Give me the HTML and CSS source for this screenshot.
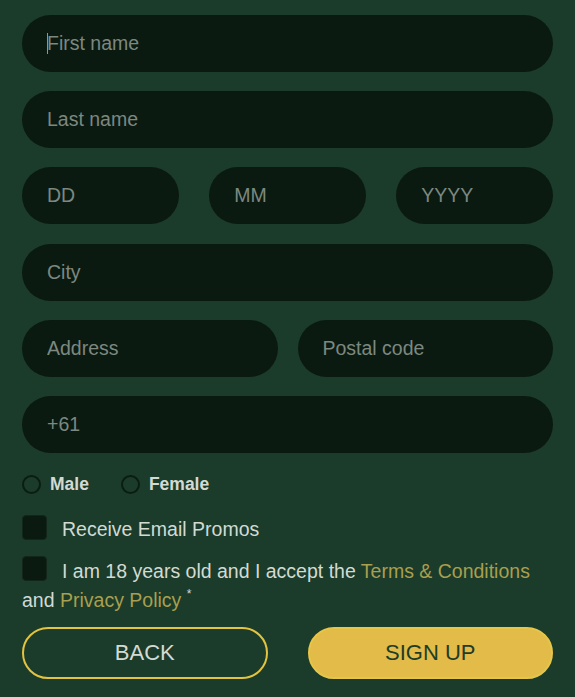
FILE: index.html
```html
<!DOCTYPE html>
<html>
<head>
<meta charset="utf-8">
<link rel="stylesheet" href="styles.css">
</head>
<body>
<form class="signup">
  <div class="fields">
    <div class="field-wrap">
      <input class="field" type="text" placeholder="First name">
      <span class="caret"></span>
    </div>
    <input class="field" type="text" placeholder="Last name">
    <div class="row-date">
      <input class="field" type="text" placeholder="DD">
      <input class="field" type="text" placeholder="MM">
      <input class="field" type="text" placeholder="YYYY">
    </div>
    <input class="field" type="text" placeholder="City">
    <div class="row-addr">
      <input class="field" type="text" placeholder="Address">
      <input class="field" type="text" placeholder="Postal code">
    </div>
    <input class="field" type="text" placeholder="+61">
  </div>

  <div class="gender">
    <label class="radio"><span class="radio-dot"></span>Male</label>
    <label class="radio"><span class="radio-dot"></span>Female</label>
  </div>

  <label class="check-line"><span class="box"></span><span class="check-text">Receive Email Promos</span></label>

  <p class="terms"><span class="box inline-box"></span>I am 18 years old and I accept the <a class="link">Terms &amp; Conditions</a> and <a class="link">Privacy Policy</a> <sup class="star">*</sup></p>

  <div class="buttons">
    <button type="button" class="btn btn-back">BACK</button>
    <button type="button" class="btn btn-sign">SIGN UP</button>
  </div>
</form>
</body>
</html>
```

FILE: styles.css
```css
html, body {
  margin: 0;
  padding: 0;
  background: #1b3c2a;
}
body {
  font-family: "Liberation Sans", Arial, sans-serif;
  color: #d3dad4;
}
.signup {
  width: 531px;
  padding: 15px 22px 0 22px;
  display: flex;
  flex-direction: column;
}
.fields {
  display: flex;
  flex-direction: column;
  gap: 19.2px;
}
.field-wrap {
  position: relative;
  display: flex;
}
.field {
  box-sizing: border-box;
  width: 100%;
  height: 57px;
  border: none;
  outline: none;
  border-radius: 29px;
  background: #0b1a10;
  padding: 0 0 0 25px;
  font-family: "Liberation Sans", Arial, sans-serif;
  font-size: 19.5px;
  color: #d3dad4;
}
.field::placeholder {
  color: #7c8880;
  opacity: 1;
}
.caret {
  position: absolute;
  left: 25px;
  top: 18px;
  width: 1px;
  height: 21px;
  background: #8d9890;
}
.row-date {
  display: grid;
  grid-template-columns: repeat(3, 1fr);
  column-gap: 30.5px;
}
.row-addr {
  display: grid;
  grid-template-columns: 1fr 1fr;
  column-gap: 20px;
}
.gender {
  display: flex;
  align-items: center;
  gap: 32px;
  margin-top: 22px;
  height: 19px;
}
.radio {
  display: flex;
  align-items: center;
  gap: 9px;
  font-weight: bold;
  font-size: 17.5px;
  color: #d3dad4;
}
.radio-dot {
  box-sizing: border-box;
  width: 19px;
  height: 19px;
  border-radius: 50%;
  border: 2px solid #0b1d11;
}
.check-line {
  display: flex;
  align-items: center;
  gap: 15px;
  margin-top: 21px;
  font-size: 19.5px;
  height: 25px;
}
.check-text {
  position: relative;
  top: 2px;
}
.box {
  box-sizing: border-box;
  width: 25px;
  height: 25px;
  border-radius: 4px;
  background: #0b1a10;
  border: 1px solid #12271a;
  flex: none;
}
.terms {
  margin: 16px 0 0 0;
  font-size: 19.5px;
  line-height: 29px;
}
.inline-box {
  display: inline-block;
  vertical-align: -3px;
  margin-right: 15px;
}
.link {
  color: #a99f4f;
  text-decoration: none;
}
.star {
  font-size: 12px;
  line-height: 0;
  vertical-align: 9px;
}
.buttons {
  display: grid;
  grid-template-columns: 1fr 1fr;
  column-gap: 40px;
  margin-top: 12px;
}
.btn {
  box-sizing: border-box;
  height: 52px;
  border-radius: 26px;
  font-family: "Liberation Sans", Arial, sans-serif;
  font-size: 22px;
  cursor: pointer;
}
.btn-back {
  background: transparent;
  border: 2px solid #e3c33f;
  color: #d3dad4;
}
.btn-sign {
  background: #e2bb48;
  border: 2px solid #e6c64a;
  color: #1e3d26;
}
```
